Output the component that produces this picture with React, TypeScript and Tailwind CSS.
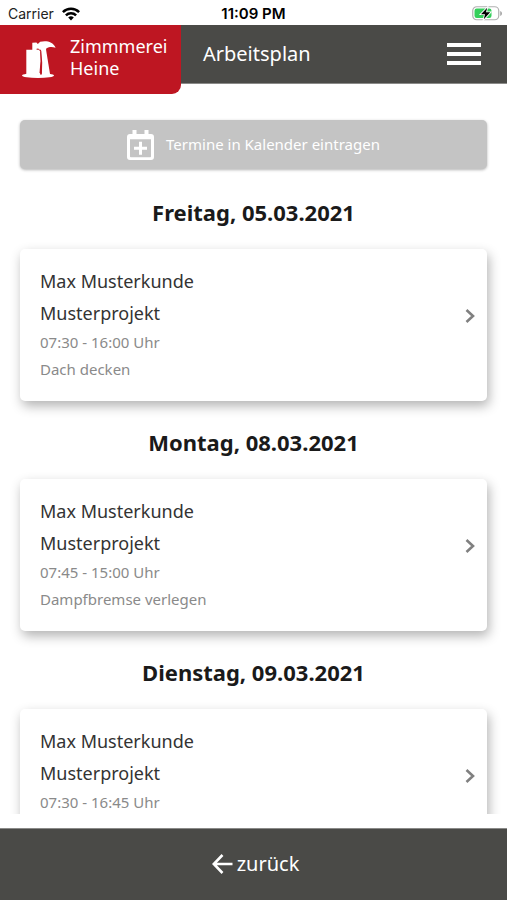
import React from "react";

type Appointment = {
  day: string;
  customer: string;
  project: string;
  time: string;
  task?: string;
};

const appointments: Appointment[] = [
  { day: "Freitag, 05.03.2021", customer: "Max Musterkunde", project: "Musterprojekt", time: "07:30 - 16:00 Uhr", task: "Dach decken" },
  { day: "Montag, 08.03.2021", customer: "Max Musterkunde", project: "Musterprojekt", time: "07:45 - 15:00 Uhr", task: "Dampfbremse verlegen" },
  { day: "Dienstag, 09.03.2021", customer: "Max Musterkunde", project: "Musterprojekt", time: "07:30 - 16:45 Uhr" },
];

function WifiIcon() {
  return (
    <svg width="18" height="14" viewBox="0 0 18 14" fill="none" stroke="#000" strokeWidth="2.5" aria-hidden="true">
      <path d="M0.9 5.2a11.5 11.5 0 0 1 16.2 0" />
      <path d="M3.9 8.3a7.2 7.2 0 0 1 10.2 0" />
      <path d="M9 13.4 6.2 10.5a4 4 0 0 1 5.6 0z" fill="#000" stroke="none" />
    </svg>
  );
}

function BatteryIcon() {
  return (
    <svg width="31" height="15" viewBox="0 0 31 15" aria-hidden="true">
      <rect x="0.75" y="0.75" width="26" height="13" rx="4" fill="#fff" stroke="#b0b0b0" strokeWidth="1.2" />
      <rect x="2.5" y="2.5" width="17" height="9.5" rx="2.2" fill="#35cf5b" />
      <path d="M28.2 5v5c2.4-.8 2.4-4.2 0-5z" fill="#a8a8a8" />
      <path d="M15.2 1.8 9 8.200h4l-1.200 5 6.400-6.900h-4.200z" fill="#000" stroke="#fff" strokeWidth="1.8" paintOrder="stroke" />
    </svg>
  );
}

function HammerLogo() {
  return (
    <svg width="34" height="37" viewBox="0 0 34 37" fill="#fff" aria-hidden="true">
      <ellipse cx="16" cy="34.5" rx="16" ry="2.5" />
      <path d="M4.300 8.800h12.500l1.400 1.400.3 10-1.200 14H4.300z" />
      <path d="M10.300 1.800 14.400 1.600l1.400 1.400 2.400-2.200c5.600-1.400 12.600-.6 15.400 5.900-3.400-1-6.100-1.200-9.100.6l-.6 1.500h-6.300l-1.400-1.400-1.600.3v1.400h-4.300z" />
      <path d="m18.900 8 5-.2 4.300 26.500h-8.500z" />
      <path d="m18.300 9.800.7 10-1 13.700h1.900l.3-12-.9-11.700z" fill="#be1622" />
    </svg>
  );
}

function CalendarAddIcon() {
  return (
    <svg width="27" height="30" viewBox="0 0 27 30" aria-hidden="true">
      <path fill="#fff" fillRule="evenodd" d="M5.5 0h4v4h8V0h4v4H24a3 3 0 0 1 3 3v20a3 3 0 0 1-3 3H3a3 3 0 0 1-3-3V7a3 3 0 0 1 3-3h2.500zM3 9.200v17.200q0 .8.8.8h19.400q.8 0 .8-.8V9.200z" />
      <path d="M13.500 11.700v13M7 18.200h13" stroke="#fff" strokeWidth="3" />
    </svg>
  );
}

function AppointmentCard({ item }: { item: Appointment }) {
  return (
    <section>
      <h2 className="text-center text-[22px] leading-[30px] font-bold text-[#1a1a1a]">{item.day}</h2>
      <a
        href="#termin"
        className="mt-[22px] mb-[26px] flex h-[152px] items-start justify-between rounded-[5px] bg-white pt-4 pr-3 pl-5 shadow-[2px_5px_12px_rgba(0,0,0,0.3)]"
      >
        <div>
          <p className="text-lg leading-8 text-[#333]">{item.customer}</p>
          <p className="text-lg leading-8 text-[#333]">{item.project}</p>
          <p className="text-[15px] leading-[27px] text-[#8a8a8a]">{item.time}</p>
          {item.task && <p className="text-[15px] leading-[27px] text-[#8a8a8a]">{item.task}</p>}
        </div>
        <svg className="mt-11" width="10" height="14" viewBox="0 0 10 14" fill="none" stroke="#808080" strokeWidth="2.6" aria-hidden="true">
          <path d="M1.500 1 8 7l-6.500 6" />
        </svg>
      </a>
    </section>
  );
}

export default function App() {
  return (
    <div className="flex h-screen flex-col overflow-hidden bg-white font-['Noto_Sans','Open_Sans',sans-serif]">
      <div className="grid h-[25px] shrink-0 grid-cols-3 items-center px-2 pt-[2px] font-['Inter',sans-serif] text-sm leading-5 text-[#222]">
        <div className="flex items-center gap-2">
          <span>Carrier</span>
          <WifiIcon />
        </div>
        <span className="text-center text-[15px] font-semibold text-black">11:09 PM</span>
        <span className="-mr-1 flex justify-end">
          <BatteryIcon />
        </span>
      </div>

      <header className="z-10 flex h-[59px] shrink-0 items-start border-b border-[#8a8a88] bg-[#4a4a47] text-white">
        <div className="flex h-[69px] w-[181px] shrink-0 items-center gap-[14px] rounded-br-[9px] bg-[#be1622] pl-[22px]">
          <HammerLogo />
          <p className="pb-[6px] text-lg leading-[22px]">
            Zimmmerei
            <br />
            Heine
          </p>
        </div>
        <h1 className="flex-1 pl-[22px] text-xl leading-[58px]">Arbeitsplan</h1>
        <button type="button" aria-label="Menü" className="mt-[18px] mr-[26px] flex flex-col gap-[5px]">
          <span className="h-1 w-[34px] bg-white" />
          <span className="h-1 w-[34px] bg-white" />
          <span className="h-1 w-[34px] bg-white" />
        </button>
      </header>

      <main className="min-h-0 flex-1 overflow-hidden px-5 pt-9">
        <button
          type="button"
          className="mb-7 flex h-[49px] w-full items-center justify-center gap-3 rounded-[5px] bg-[#c4c4c4] text-[15px] text-white shadow-[0_1px_3px_rgba(0,0,0,0.3)]"
        >
          <CalendarAddIcon />
          Termine in Kalender eintragen
        </button>
        {appointments.map((item) => (
          <AppointmentCard key={item.day} item={item} />
        ))}
      </main>

      <footer className="mt-[14px] h-[72px] shrink-0 border-t border-[#8a8a88] bg-[#4a4a47]">
        <button type="button" className="flex h-[70px] w-full items-center justify-center gap-1 pl-1 text-xl text-white">
          <svg width="21" height="20" viewBox="0 0 21 20" fill="none" stroke="#fff" strokeWidth="2.6" aria-hidden="true">
            <path d="M20.500 10H2M10.500 1 1.800 10l8.700 9" />
          </svg>
          zurück
        </button>
      </footer>
    </div>
  );
}
